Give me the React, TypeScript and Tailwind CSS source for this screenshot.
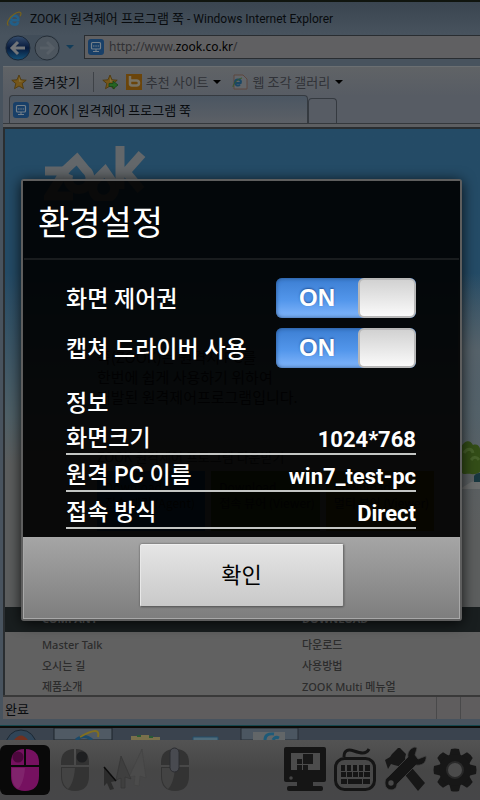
import React, { useState } from 'react';

const downloads = [
  { title: '접속 대기 (Agent)', color: 'bg-[#0b3a5c]' },
  { title: '접속 뷰어 (Viewer)', color: 'bg-[#2c3c10]' },
  { title: '멀티 뷰어 (Viewer)', color: 'bg-[#4a3c08]' },
];

const footerColumns = [
  { title: 'COMPANY', links: ['Master Talk', '오시는 길', '제품소개'] },
  { title: 'DOWNLOAD', links: ['다운로드', '사용방법', 'ZOOK Multi 메뉴얼'] },
];

const info = [
  { label: '화면크기', value: '1024*768' },
  { label: '원격 PC 이름', value: 'win7_test-pc' },
  { label: '접속 방식', value: 'Direct' },
];

const IeIcon = () => (
  <svg viewBox="0 0 16 16" className="h-4 w-4 shrink-0" aria-hidden="true">
    <path
      d="M13.500 9.200H5.200M4.800 9a3.800 3.800 0 0 1 7.600-1M4.800 9.500a3.800 3.800 0 0 0 7.400 1.500"
      fill="none"
      stroke="#225f88"
      strokeWidth="2.600"
    />
    <path
      d="M2.500 14.500C-.5 13 3 6.500 8 3.200c3.500-2.300 7-2.800 7-.6 0 .9-.4 1.800-.9 2.500"
      fill="none"
      stroke="#77621c"
      strokeWidth="1.200"
    />
  </svg>
);

const SiteIcon = () => (
  <svg viewBox="0 0 16 16" className="h-4 w-4 shrink-0" aria-hidden="true">
    <rect width="16" height="16" rx="3" fill="#183f68" />
    <rect
      x="3.500"
      y="3.500"
      width="9"
      height="6.500"
      rx="1"
      fill="none"
      stroke="#75808a"
      strokeWidth="1.200"
    />
    <path d="M5 7h1.500M7.300 7h1.500M9.600 7h1.500M5 12.500h6M8 10v2" stroke="#75808a" />
  </svg>
);

const StarIcon = ({ arrow = false }: { arrow?: boolean }) => (
  <svg viewBox="0 0 16 16" className="h-4 w-4 shrink-0" aria-hidden="true">
    <path
      d="M8 1l2 4.800 5.200.4-4 3.400 1.300 5.100L8 12l-4.500 2.700 1.300-5.100-4-3.400L6 5.800z"
      fill="#75561a"
      stroke="#4c3709"
      strokeWidth=".8"
    />
    <path d="M8 3l1.300 3.600 3 .3-4.300 1z" fill="#80703c" />
    {arrow && (
      <path
        d="M7 9.500h4V7l5 4-5 4v-2.500H7z"
        fill="#266523"
        stroke="#17451a"
        strokeWidth=".8"
      />
    )}
  </svg>
);

const Caret = ({ className = 'fill-black' }: { className?: string }) => (
  <svg viewBox="0 0 8 4" className={`h-1 w-2 shrink-0 ${className}`} aria-hidden="true">
    <path d="M0 0h8L4 4z" />
  </svg>
);

const RoundArrow = ({ forward = false }: { forward?: boolean }) => (
  <svg viewBox="0 0 26 26" className="h-[26px] w-[26px]" aria-hidden="true">
    <defs>
      <linearGradient id="back" x2="0" y2="1">
        <stop stopColor="#354d6d" />
        <stop offset=".5" stopColor="#071a3c" />
        <stop offset="1" stopColor="#155278" />
      </linearGradient>
    </defs>
    <circle
      cx="13"
      cy="13"
      r="12"
      fill={forward ? '#4d565f' : 'url(#back)'}
      stroke={forward ? '#262f38' : '#1b2838'}
    />
    <path
      d={forward ? 'M6 13h12M13 7l6 6-6 6' : 'M20 13H8M13 7l-6 6 6 6'}
      fill="none"
      stroke={forward ? '#575f67' : '#737679'}
      strokeWidth="3"
    />
  </svg>
);

const Logo = () => (
  <svg viewBox="0 0 102 56" className="h-14 w-[102px]" aria-label="zook" role="img">
    <g fill="none" stroke="#63676a" strokeWidth="9">
      <path d="M1 26H21L5 51H29" />
      <path d="M18 28L33 14L42 25A11 11 0 1 1 25 29" />
      <path d="M48 39L61 26L68 36A11 11 0 1 1 50 38" />
      <path d="M76 1V44M98 9L82 27L97 45" />
    </g>
  </svg>
);

const Browser = () => (
  <div className="flex flex-1 flex-col bg-[#48535e] font-['Noto_Sans_CJK_KR',sans-serif] text-[13px] text-[#080b0e]">
    <div className="h-[2px] bg-[#10150f]" />
    <div className="flex h-[33px] items-center gap-2 bg-linear-to-b from-[#3a4550] to-[#48535e] pl-[6px]">
      <IeIcon />
      <span className="font-['Roboto','Noto_Sans_CJK_KR',sans-serif] text-xs whitespace-nowrap">
        ZOOK | <span className="text-[13px]">원격제어 프로그램 쭉</span> - Windows Internet Explorer
      </span>
    </div>

    <div className="flex h-[31px] items-start pl-[5px]">
      <div className="flex gap-[3px] rounded-full bg-[#414d59]">
        <button aria-label="Back">
          <RoundArrow />
        </button>
        <button aria-label="Forward">
          <RoundArrow forward />
        </button>
      </div>
      <button aria-label="Recent pages" className="flex h-6 w-6 items-center justify-center pr-1">
        <Caret className="fill-[#123c58]" />
      </button>
      <form className="flex h-6 flex-1 items-center gap-[5px] border border-r-0 border-[#292d31] bg-[#606062] pl-[3px] font-['Noto_Sans',sans-serif] text-xs">
        <SiteIcon />
        <div className="grid flex-1 items-center">
          <input
            aria-label="Address"
            defaultValue="http://www.zook.co.kr/"
            className="col-start-1 row-start-1 w-full bg-transparent text-transparent outline-none"
          />
          <span
            aria-hidden="true"
            className="pointer-events-none col-start-1 row-start-1 text-[#303033]"
          >
            http://www.<span className="text-black">zook.co.kr</span>/
          </span>
        </div>
      </form>
    </div>

    <div className="ml-[3px] flex h-[30px] items-center border-t border-[#6b6f72] bg-linear-to-b from-[#606366] to-[#575c64] pl-2 whitespace-nowrap">
      <button className="flex items-center gap-[5px]">
        <StarIcon />
        즐겨찾기
      </button>
      <span className="mr-2 ml-[13px] h-5 w-px bg-[#3e4247]" />
      <button aria-label="Add to favorites" className="mr-2">
        <StarIcon arrow />
      </button>
      <button className="mr-[11px] flex items-center gap-1 text-[#303237]">
        <svg viewBox="0 0 16 16" className="h-4 w-4" aria-hidden="true">
          <path d="M0 0h16v16H0z" fill="#6b450b" />
          <path d="M4 2v8.500M4 6.500h6.500a2 2 0 0 1 0 5H6a2 2 0 0 1-2-2" fill="none" stroke="#777264" strokeWidth="2.500" />
        </svg>
        추천 사이트
        <Caret />
      </button>
      <button className="flex items-center gap-[5px] text-[#303237]">
        <svg viewBox="0 0 16 16" className="h-4 w-4" aria-hidden="true">
          <path d="M2 1h9l4 4v10H2z" fill="#62666a" stroke="#5d463f" />
          <path d="M9.500 9H3a2.800 2.800 0 0 0 5 1.500M3 8.500a3 3 0 0 1 6 0" fill="none" stroke="#1b4765" strokeWidth="2" />
          <path d="M1 13c0-3 4-8 9-9" fill="none" stroke="#355929" />
        </svg>
        웹 조각 갤러리
        <Caret />
      </button>
    </div>

    <div className="ml-[3px] flex h-7 items-end border-b border-[#34383c] bg-[#575c64] pl-[6px]">
      <div className="flex h-7 w-[299px] items-center gap-1 rounded-t border border-b-0 border-[#353a40] bg-linear-to-b from-[#4b5662] to-[#5c6066] pl-[3px]">
        <SiteIcon />
        <span>ZOOK | 원격제어 프로그램 쭉</span>
      </div>
      <button aria-label="New tab" className="h-[25px] w-[29px] rounded-t border border-b-0 border-[#353a40]" />
    </div>
    <div className="ml-[3px] h-[3px] bg-[#5d5f62]" />

    <main className="ml-[3px] flex flex-1 flex-col border-t-2 border-l-2 border-[#2a2e31] bg-[#606060]">
      <div className="relative flex flex-1 flex-col overflow-hidden bg-linear-to-b from-[#244b66] from-30% via-[#4f6067] via-60% to-[#5c5e5e] to-70% pl-[39px]">
        <svg viewBox="0 0 40 260" className="absolute top-36 right-0 h-[260px] w-10" aria-hidden="true">
          <defs>
            <linearGradient id="cloud" x2="0" y2="1">
              <stop stopColor="#4c5e69" stopOpacity="0" />
              <stop offset=".3" stopColor="#56626a" />
              <stop offset="1" stopColor="#56626a" stopOpacity="0" />
            </linearGradient>
          </defs>
          <path d="M18 0h22v260H18z" fill="url(#cloud)" />
          <path d="M20 176c4-9 10-10 13-4 6-2 8 4 7 8v19c-5 4-12 1-14 2-5 1-7-5-6-8z" fill="#334d17" />
          <path d="M24 180c3-5 8-5 9 0M31 187c3-4 6-3 8 0" fill="none" stroke="#46602a" strokeWidth="3" />
          <path d="M20 216l11-7 9-2v9z" fill="#6b6d6d" />
          <path d="M34 203c2-3 5-3 6-3v9h-6z" fill="#18373f" />
        </svg>
        <div className="pt-4">
          <Logo />
        </div>
        <div className="flex flex-col pt-[146px] pr-[46px] pl-[53px]">
          <p className="text-[15px] leading-5 whitespace-nowrap text-[#101214]">
            쭉(ZOOK)는 원격지 PC를
            <br />
            한번에 쉽게 사용하기 위하여
            <br />
            개발된 원격제어프로그램입니다.
          </p>
          <p className="pt-10 text-[#202020]">ZOOK 원격제어 프로그램 다운받기</p>
          <div className="grid grid-cols-3 gap-[6px] pt-1 text-xs text-[#101010]">
            {downloads.map(({ title, color }) => (
              <a key={title} href="#download" className={`h-[60px] overflow-hidden pt-2 pl-2 whitespace-nowrap ${color}`}>
                Download
                <br />
                {title}
              </a>
            ))}
          </div>
        </div>
      </div>
      <footer className="bg-[#616161] font-['Noto_Sans','Noto_Sans_CJK_KR',sans-serif] text-[11px] text-[#2c2c2c]">
        <div className="flex h-[25px] items-center bg-[#191e1f] pl-[37px] font-bold text-[#606263]">
          {footerColumns.map(({ title }) => (
            <h2 key={title} className="w-[260px] shrink-0">
              {title}
            </h2>
          ))}
        </div>
        <div className="flex h-[63px] pt-[3px] pl-[37px] font-medium">
          {footerColumns.map(({ title, links }) => (
            <ul key={title} className="w-[260px] shrink-0">
              {links.map((link) => (
                <li key={link} className="h-[21px] leading-5">
                  <a href="#page">{link}</a>
                </li>
              ))}
            </ul>
          ))}
        </div>
      </footer>
    </main>

    <div className="ml-[3px] flex h-6 items-stretch border-t-2 border-[#393939] bg-[#5f5d5e] pl-[2px] leading-6">
      <span className="flex-1">완료</span>
      <span className="w-6 border-l border-[#49494a]" />
      <span className="w-5 border-l border-[#49494a]" />
    </div>
    <div className="h-[6px] bg-[#48535e]" />
    <div className="h-[3px] border-t border-[#15484e] bg-[#0c0d0a]" />
    <div className="flex h-3 overflow-hidden bg-[#3a434e]">
      <svg viewBox="0 0 300 12" className="h-3 w-[300px]" aria-hidden="true">
        <circle cx="21" cy="17" r="15" fill="#304558" stroke="#1c2833" />
        <path d="M14 12q7-9 14 0" fill="#70301f" />
        <path d="M54 0h58v12H54z" fill="#505a64" stroke="#1d242b" />
        <path d="M76 12q8-7 16 0" fill="none" stroke="#1b4a6a" strokeWidth="3" />
        <path d="M80 9q21-12 18 0" fill="none" stroke="#816f20" strokeWidth="2" />
        <path d="M131 8h10v-1h8v2h11v3h-29z" fill="#79704b" />
        <path d="M137 8h4M149 9h4" stroke="#295b36" strokeWidth="2" />
        <path d="M193 9h25v4h-25z" fill="#4e6b7a" stroke="#244f68" />
        <path d="M241 0h57v12h-57z" fill="#4b5661" stroke="#262d35" />
        <path d="M253 4h32v8h-32z" fill="#626668" />
        <path d="M265 12q0-7 9-6M273 12q2-4 6-2" fill="none" stroke="#1d5a78" strokeWidth="3" />
      </svg>
    </div>
  </div>
);

type MouseProps = { color: string; spot: string; at?: 'left' | 'right' | 'wheel' };

const MouseIcon = ({ color, spot, at = 'left' }: MouseProps) => (
  <svg viewBox="0 0 50 50" className="h-[50px] w-[50px]" aria-hidden="true">
    <g fill={color}>
      <path d="M24 4v16H11v-3C11 9 16 4 24 4z" />
      <path d="M26 4v16h13v-3c0-8-5-13-13-13z" />
      <path d="M11 22h28v9c0 10-5 15-14 15s-14-5-14-15z" />
    </g>
    <path d="M12 23h13c-1 12-4 18-7 21-4-3-6-7-6-13z" fill="#fff" opacity=".08" />
    {at === 'wheel' ? (
      <rect x="20" y="3" width="9" height="24" rx="4.500" fill={spot} stroke="#2b2c30" />
    ) : (
      <circle cx={at === 'left' ? 18 : 32} cy="12" r="5.500" fill={spot} />
    )}
  </svg>
);

const CursorsIcon = () => (
  <svg viewBox="0 0 50 50" className="h-[50px] w-[50px]" aria-hidden="true">
    <path d="M42 4l4 29-6-2-1 10-5-1 1-9-6 1z" fill="#4b4b4b" stroke="#444444" strokeWidth=".7" />
    <path d="M21 11l10 23-6-2v11h-4V33l-5 2z" fill="#3f3f3f" stroke="#353535" strokeWidth=".7" />
    <path d="M4 22l12 14-5 1 3 7-4 1-3-7-3 3z" fill="#2c2c2c" />
    <path d="M4 22l12 14" stroke="#0c0c0c" strokeWidth="1.500" />
  </svg>
);

const MonitorIcon = () => (
  <svg viewBox="0 0 50 50" className="h-[50px] w-[50px]" aria-hidden="true">
    <g fill="#151515">
      <rect x="4" y="2" width="42" height="35" rx="2" />
      <path d="M17 37h16v4H17z" />
      <rect x="7" y="41" width="36" height="5" rx="2" />
    </g>
    <path d="M11 8h29v17H11z" fill="#4c4c4c" />
    <path d="M23 9h10v10H23zM17 14h5v5h-5zM17 20h5v5h-5zM23 20h5v5h-5z" fill="#181818" />
    <circle cx="11" cy="33" r="1.800" fill="#454545" />
  </svg>
);

const KeyboardIcon = () => (
  <svg viewBox="0 0 50 50" className="h-[50px] w-[50px]" aria-hidden="true">
    <rect x="5.500" y="13.500" width="39" height="31" rx="9" fill="#484848" stroke="#151515" strokeWidth="3" />
    <path d="M14 12c0-7 4-8 10-6s12 4 15-2" fill="none" stroke="#151515" strokeWidth="3" />
    <path
      d="M11 20h4v6h-4zM17 20h4v6h-4zM23 20h4v6h-4zM29 20h4v6h-4zM35 20h5v6h-5zM11 27h5v5h-5zM17 27h5v5h-5zM23 27h5v5h-5zM29 27h4v5h-4zM34 27h6v5h-6zM11 34h6v5h-6zM18 34h14v5H18zM33 34h7v5h-7z"
      fill="#151515"
    />
  </svg>
);

const ToolsIcon = () => (
  <svg viewBox="0 0 50 50" className="h-[50px] w-[50px]" aria-hidden="true">
    <path d="M5 15l5-3 2-3 6-6 2 0 6 6-1 4 1 3 19 22-7 8-20-25-4-1-3-1-3 5z" fill="#171717" />
    <path
      d="M8 32l20-20c-1-4 2-9 7-10l2 1-2 7 3 4 8-3c1 7-5 10-10 9L17 39c0 8-12 8-12-1 0-3 1-5 3-6z"
      fill="#151515"
      stroke="#434343"
      strokeWidth=".8"
    />
    <circle cx="11" cy="38" r="2.700" fill="#484848" />
  </svg>
);

const GearIcon = () => (
  <svg viewBox="0 0 50 50" className="h-[50px] w-[50px]" aria-hidden="true">
    <g fill="#171717">
      {[0, 45, 90, 135, 180, 225, 270, 315].map((angle) => (
        <path key={angle} d="M19 12l2-8q4-1 8 0l2 8z" transform={`rotate(${angle} 25 25)`} />
      ))}
      <circle cx="25" cy="25" r="16" />
    </g>
    <circle cx="25" cy="25" r="8" fill="#4b4b4b" stroke="#292929" strokeWidth="2" />
  </svg>
);

const Toolbar = () => (
  <div className="flex h-[60px] items-center justify-between bg-linear-to-b from-[#535353] via-[#464646] via-50% to-[#464648]">
    <div className="flex">
      <button aria-label="Left click" className="rounded-md bg-[#090909]">
        <MouseIcon color="#761160" spot="#4d073d" />
      </button>
      <button aria-label="Right click">
        <MouseIcon color="#333333" spot="#1e1f21" at="right" />
      </button>
      <button aria-label="Pointer">
        <CursorsIcon />
      </button>
      <button aria-label="Wheel">
        <MouseIcon color="#333333" spot="#484a50" at="wheel" />
      </button>
    </div>
    <div className="flex">
      <button aria-label="Monitor">
        <MonitorIcon />
      </button>
      <button aria-label="Keyboard">
        <KeyboardIcon />
      </button>
      <button aria-label="Tools">
        <ToolsIcon />
      </button>
      <button aria-label="Settings">
        <GearIcon />
      </button>
    </div>
  </div>
);

const Toggle = ({ id, label }: { id: string; label: string }) => {
  const [on, setOn] = useState(true);

  return (
    <div className="flex h-10 items-center justify-between">
      <label htmlFor={id} className="pt-1">
        {label}
      </label>
      <label
        htmlFor={id}
        className={`flex h-10 w-[140px] cursor-pointer overflow-hidden rounded-md bg-linear-to-b from-[#3c7ed2] via-[#5296eb] via-55% to-[#82b6fb] shadow-[inset_0_0_4px_#244f87] ${on ? '' : 'flex-row-reverse grayscale'}`}
      >
        <input
          id={id}
          type="checkbox"
          checked={on}
          onChange={(e) => setOn(e.target.checked)}
          className="sr-only"
        />
        <span className="flex-1 text-center font-['Liberation_Sans',sans-serif] text-2xl leading-10 font-bold text-white [text-shadow:0_-1px_2px_#24549a]">
          {on ? 'ON' : 'OFF'}
        </span>
        <span className="w-[58px] rounded-md border-2 border-[#b8b8b8] bg-linear-to-b from-[#d2d2d2] to-[#fafafa]" />
      </label>
    </div>
  );
};

const SettingsDialog = () => (
  <div className="absolute inset-0 flex items-center justify-center pr-[18px] pl-[21px]">
    <section
      role="dialog"
      aria-labelledby="settings-title"
      className="w-full max-w-[600px] rounded-[3px] border-2 border-[#5e5e5e] font-['Roboto','Noto_Sans_CJK_KR',sans-serif] text-[23px] shadow-[0_2px_14px_#000000cc]"
    >
      <div className="bg-black/90 text-white">
        <h1
          id="settings-title"
          className="mx-px flex h-[79px] items-center border-b-2 border-[#191c1e] pt-2 pl-[14px] text-[34px]"
        >
          환경설정
        </h1>
        <div className="pt-[18px] pr-11 pb-2 pl-[43px] font-medium">
          <div className="flex flex-col gap-[10px]">
            <Toggle id="control" label="화면 제어권" />
            <Toggle id="capture" label="캡쳐 드라이버 사용" />
          </div>
          <h2 className="pt-[22px] leading-7">정보</h2>
          <dl>
            {info.map(({ label, value }) => (
              <div
                key={label}
                className="flex h-[37px] items-center justify-between border-b-2 border-[#c4c6c4] pt-2"
              >
                <dt>{label}</dt>
                <dd className="text-[22px] font-bold">{value}</dd>
              </div>
            ))}
          </dl>
        </div>
      </div>
      <div className="flex h-[82px] justify-center border border-[#a8a8a8] bg-linear-to-b from-[#a5a5a5] to-[#7e7e7e] pt-[6px]">
        <button className="h-[63px] w-[204px] rounded-[2px] border border-t-[#f0f0f0] border-r-[#707070] border-b-[#606060] border-l-[#e8e8e8] bg-linear-to-b from-[#e5e5e5] to-[#c9c9c9] text-[22px] text-black shadow-[0_0_2px_#444444]">
          확인
        </button>
      </div>
    </section>
  </div>
);

const App = () => (
  <div className="relative flex min-h-screen flex-col overflow-hidden">
    <Browser />
    <Toolbar />
    <SettingsDialog />
  </div>
);

export default App;
